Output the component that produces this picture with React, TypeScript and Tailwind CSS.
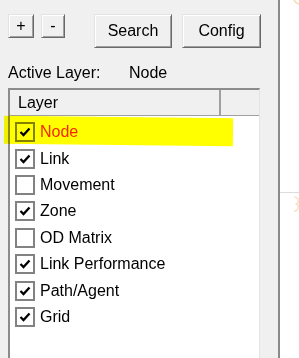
import React from "react";

const layers = [
  { name: "Node", checked: true, active: true },
  { name: "Link", checked: true },
  { name: "Movement", checked: false },
  { name: "Zone", checked: true },
  { name: "OD Matrix", checked: false },
  { name: "Link Performance", checked: true },
  { name: "Path/Agent", checked: true },
  { name: "Grid", checked: true },
];

function Button({ label, className }: { label: string; className: string }) {
  return (
    <button
      className={
        "flex items-center justify-center bg-[#f0f0f0] text-black border border-t-[#e3e3e3] border-l-[#e3e3e3] border-r-[#696969] border-b-[#696969] shadow-[inset_1px_1px_#ffffff,inset_-1px_-1px_#a0a0a0] " +
        className
      }
    >
      {label}
    </button>
  );
}

function Checkbox({ checked }: { checked: boolean }) {
  return (
    <div className="w-[20px] h-[20px] border-2 border-[#828282] bg-white flex items-center justify-center shrink-0">
      {checked && (
        <svg width="14" height="14" viewBox="0 0 14 14">
          <polyline
            points="2.5,7 5.5,10 11.5,3.5"
            fill="none"
            stroke="#000"
            strokeWidth="2.3"
          />
        </svg>
      )}
    </div>
  );
}

export default function App() {
  return (
    <div className="h-[358px] w-[299px] overflow-hidden flex font-['Liberation_Sans',Arial,sans-serif] text-[16px] text-black">

      <div className="relative w-[278px] shrink-0 bg-[#f0f0f0] pl-[8px] pt-[14px]">

        <div className="flex items-start">
          <Button label="+" className="w-[26px] h-[24px]" />
          <Button label="-" className="w-[24px] h-[24px] ml-[7px]" />
          <Button label="Search" className="w-[78px] h-[34px] ml-[29px]" />
          <Button label="Config" className="w-[79px] h-[34px] ml-[10px]" />
        </div>

        <div className="flex mt-[16px] leading-[18px]">
          <span className="w-[121px]">Active Layer:</span>
          <span>Node</span>
        </div>

        <div className="mt-[6px] w-[252px] h-[300px] bg-white border-t-2 border-l-2 border-t-[#8c8c8c] border-l-[#8c8c8c] border-r border-r-[#e3e3e3]">

          <div className="flex h-[26px] bg-[#f0f0f0] border-b border-[#a0a0a0]">
            <div className="w-[211px] pl-[8px] flex items-center border-r-2 border-[#a0a0a0]">
              Layer
            </div>
            <div className="flex-1 bg-[#f0f0f0]"></div>
          </div>

          <div className="pt-[3px] pl-[5px]">
            {layers.map((layer) => (
              <div key={layer.name} className="h-[26.4px] flex items-center gap-[5px]">
                <Checkbox checked={layer.checked} />
                <span className={layer.active ? "text-[#f52800]" : ""}>
                  {layer.name}
                </span>
              </div>
            ))}
          </div>

        </div>

        <div className="absolute left-[4px] top-[117px] w-[229px] h-[28px] bg-[#ffff00] mix-blend-multiply rotate-[0.6deg]"></div>

      </div>

      <div className="w-[2px] bg-[#8a8a8a] shrink-0"></div>

      <div className="relative flex-1 bg-white">
        <div className="absolute left-0 right-0 top-[192px] h-px bg-[#dcdcdc]"></div>
        <svg className="absolute left-[13px] top-0" width="8" height="6" viewBox="0 0 8 6">
          <path d="M1 0 Q3 4 7 4" fill="none" stroke="#f6dcb4" strokeWidth="1.5" />
        </svg>
        <svg className="absolute left-[12px] top-[195px]" width="8" height="18" viewBox="0 0 8 18">
          <path d="M2 2 Q7 2 6 8 Q2 9 6 10 Q7 16 2 16" fill="none" stroke="#f6e2c4" strokeWidth="1.5" />
        </svg>
      </div>

    </div>
  );
}
